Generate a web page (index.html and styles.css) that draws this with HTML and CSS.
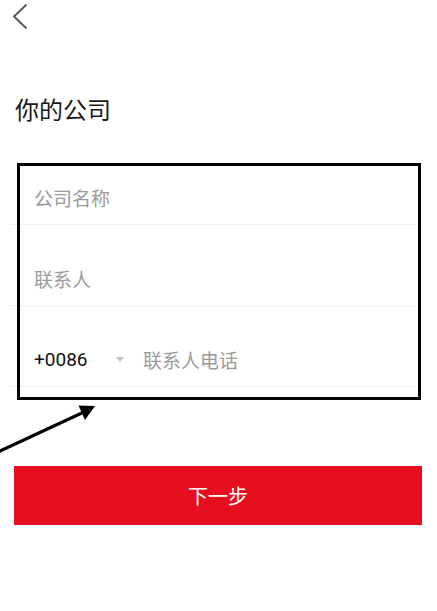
FILE: index.html
```html
<!DOCTYPE html>
<html lang="zh-CN">
<head>
<meta charset="utf-8">
<title>你的公司</title>
<link rel="stylesheet" href="styles.css">
</head>
<body>
<div class="page">
  <header class="header">
    <svg class="back" width="16" height="26" viewBox="0 0 16 26" aria-hidden="true">
      <polyline points="14,1 2,12.5 14,24" fill="none" stroke="#555" stroke-width="1.8" stroke-linecap="round" stroke-linejoin="round"/>
    </svg>
  </header>
  <h1 class="title">你的公司</h1>
  <div class="form">
    <div class="row"><span class="placeholder">公司名称</span></div>
    <div class="row"><span class="placeholder">联系人</span></div>
    <div class="row">
      <span class="code">+0086</span>
      <span class="caret"></span>
      <span class="placeholder">联系人电话</span>
    </div>
  </div>
  <button class="next">下一步</button>

  <div class="annot-box"></div>
  <svg class="annot-arrow" width="100" height="60" viewBox="0 400 100 60" aria-hidden="true">
    <line x1="-2" y1="452" x2="84" y2="412" stroke="#000" stroke-width="3.2"/>
    <polygon points="95,406 78.5,405.5 85,420" fill="#000"/>
  </svg>
</div>
</body>
</html>
```

FILE: styles.css
```css
html, body {
  margin: 0;
  padding: 0;
  background: #fff;
}
body {
  font-family: "Noto Sans CJK SC", "Noto Sans", sans-serif;
  width: 437px;
  height: 611px;
  overflow: hidden;
}
.page {
  position: relative;
  width: 437px;
  height: 611px;
}
.header {
  height: 44px;
  display: flex;
  align-items: flex-start;
}
.back {
  margin-left: 12px;
  margin-top: 4px;
}
.title {
  margin: 50px 0 0 15px;
  font-size: 24px;
  line-height: 29px;
  font-weight: 400;
  color: #1a1a1a;
}
.form {
  margin: 21px 17px 0 10px;
}
.row {
  display: flex;
  align-items: center;
  height: 26px;
  padding: 41px 0 13px 24px;
  border-bottom: 1px solid #efefef;
  font-size: 19px;
  line-height: 26px;
}
.placeholder {
  color: #9a9a9a;
}
.code {
  font-family: "Roboto", "Noto Sans CJK SC", sans-serif;
  color: #111;
  width: 82px;
}
.caret {
  width: 0;
  height: 0;
  border-left: 4px solid transparent;
  border-right: 4px solid transparent;
  border-top: 5px solid #c4c4c4;
  margin-right: 19px;
  margin-top: -2px;
}
.next {
  display: block;
  margin: 79px 15px 0 14px;
  width: calc(100% - 29px);
  height: 59px;
  border: none;
  background: #e50f1f;
  color: #fff;
  font-family: "Noto Sans CJK SC", sans-serif;
  font-size: 20px;
  padding: 0;
}
.annot-box {
  position: absolute;
  left: 17px;
  top: 163px;
  width: 404px;
  height: 237px;
  box-sizing: border-box;
  border: 3px solid #000;
}
.annot-arrow {
  position: absolute;
  left: 0;
  top: 400px;
}
```
